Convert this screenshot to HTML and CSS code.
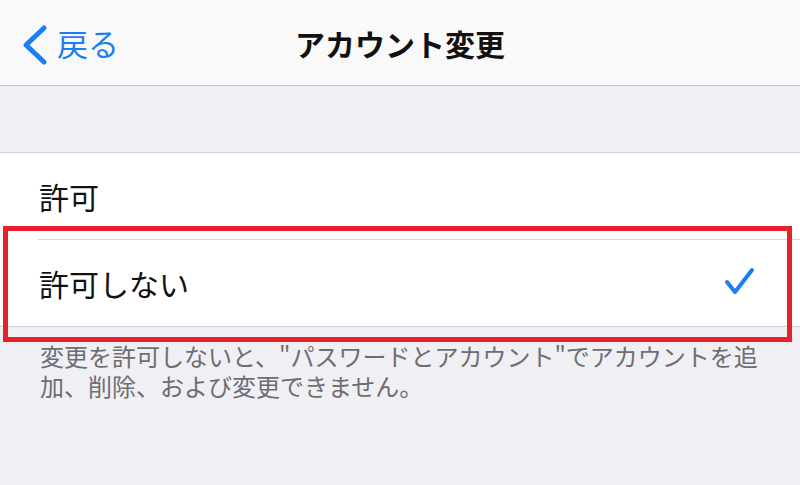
FILE: index.html
```html
<!DOCTYPE html>
<html lang="ja">
<head>
<meta charset="utf-8">
<link rel="stylesheet" href="styles.css">
</head>
<body>
<div class="screen">
  <header class="nav">
    <div class="back">
      <svg class="chev" width="30" height="42" viewBox="0 0 30 42"><path d="M24 4 L6 21 L24 38" fill="none" stroke="#1a7ef5" stroke-width="5" stroke-linecap="round" stroke-linejoin="round"/></svg>
      <span class="back-label">戻る</span>
    </div>
    <h1 class="title">アカウント変更</h1>
  </header>
  <div class="spacer"></div>
  <ul class="list">
    <li class="row"><span class="label">許可</span></li>
    <li class="row selected"><span class="label">許可しない</span>
      <svg class="check" width="34" height="32" viewBox="0 0 34 32"><path d="M4 17 L12 27 L29 5" fill="none" stroke="#1a7ef5" stroke-width="4" stroke-linecap="round" stroke-linejoin="round"/></svg>
    </li>
  </ul>
  <p class="footer">変更を許可しないと、"パスワードとアカウント"でアカウントを追加、削除、および変更できません。</p>
  <div class="highlight"></div>
</div>
</body>
</html>
```
FILE: styles.css
```css
html, body {
  margin: 0;
  padding: 0;
}
body {
  width: 800px;
  height: 485px;
  overflow: hidden;
  background: #efeff4;
  font-family: "Noto Sans CJK JP", "Noto Sans", sans-serif;
}
.screen {
  position: relative;
  height: 485px;
}
.nav {
  height: 85px;
  background: #f9f9f9;
  border-bottom: 1px solid #c4c4c8;
  display: flex;
  align-items: center;
  justify-content: center;
  position: relative;
}
.back {
  position: absolute;
  left: 20px;
  top: 0;
  bottom: 0;
  display: flex;
  align-items: center;
  gap: 7px;
}
.chev {
  display: block;
  margin-top: 4px;
}
.back-label {
  color: #1a7ef5;
  font-size: 31px;
  line-height: 1;
}
.title {
  margin: 0;
  font-size: 30px;
  font-weight: 700;
  color: #111;
  line-height: 1;
}
.spacer {
  height: 66px;
}
.list {
  list-style: none;
  margin: 0;
  padding: 0 0 0 38px;
  background: #fff;
  border-top: 1px solid #d3d3d7;
  border-bottom: 1px solid #d3d3d7;
}
.row {
  height: 86px;
  display: flex;
  align-items: center;
  justify-content: space-between;
  padding-right: 43px;
  font-size: 30px;
  color: #111;
}
.row + .row {
  border-top: 1px solid #d6d6da;
}
.label {
  line-height: 1;
  margin-left: 1px;
}
.check {
  display: block;
  margin-top: -4px;
}
.footer {
  margin: 0;
  padding: 14px 30px 0 40px;
  font-size: 24px;
  line-height: 30px;
  color: #6d6d72;
}
.highlight {
  position: absolute;
  left: 3px;
  top: 226px;
  width: 779px;
  height: 106px;
  border: 5px solid #e8202b;
}
```
